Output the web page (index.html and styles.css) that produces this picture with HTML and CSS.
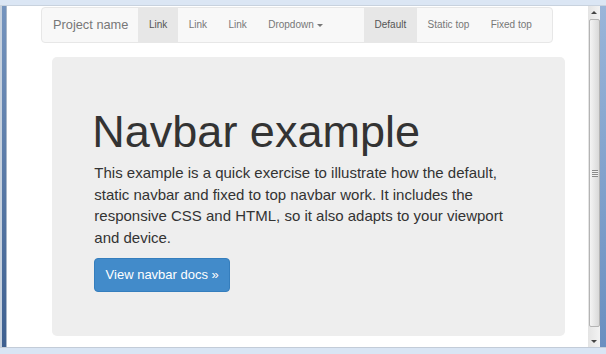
FILE: index.html
```html
<!DOCTYPE html>
<html lang="en">
<head>
    <meta charset="UTF-8">
    <title>Navbar Template</title>
    <link rel="stylesheet" href="styles.css">
</head>
<body>
    <div class="window">
        <div class="frame-top"></div>
        <div class="frame-mid">
            <div class="frame-left"></div>
            <div class="viewport">
                <nav class="navbar">
                    <a class="brand" href="#">Project name</a>
                    <ul class="nav">
                        <li class="active"><a href="#">Link</a></li>
                        <li><a href="#">Link</a></li>
                        <li><a href="#">Link</a></li>
                        <li><a href="#">Dropdown <b class="caret"></b></a></li>
                    </ul>
                    <ul class="nav nav-right">
                        <li class="active"><a href="#">Default</a></li>
                        <li><a href="#">Static top</a></li>
                        <li><a href="#">Fixed top</a></li>
                    </ul>
                </nav> <!-- navbar end -->

                <div class="jumbotron">
                    <h1>Navbar example</h1>
                    <p>This example is a quick exercise to illustrate how the default, static navbar and fixed to top navbar work. It includes the responsive CSS and HTML, so it also adapts to your viewport and device.</p>
                    <div class="actions">
                        <a class="btn-docs" href="#">View navbar docs &raquo;</a>
                    </div>
                </div> <!-- jumbotron end -->
            </div>
            <div class="scrollbar">
                <div class="sb-arrow up"></div>
                <div class="sb-thumb"><span class="grip"></span></div>
                <div class="sb-arrow down"></div>
            </div>
            <div class="frame-right"></div>
        </div>
        <div class="frame-bottom"></div>
    </div>
</body>
</html>
```

FILE: styles.css
```css
body {
    margin: 0;
    font-family: "Liberation Sans", Arial, sans-serif;
    color: #333;
}

/* browser window frame */
div.window {
    width: 606px;
    height: 354px;
    display: flex;
    flex-direction: column;
    overflow: hidden;
}

div.frame-top {
    height: 5px;
    background-color: #dbe6f4;
    border-bottom: 1px solid #c8d2de;
}

div.frame-bottom {
    height: 6px;
    background-color: #d9e5f4;
    border-top: 1px solid #c3ccd8;
}

div.frame-mid {
    height: 341px;
    display: flex;
}

div.frame-left {
    width: 7px;
    background:
        linear-gradient(#7594be, #3e6090) 2px 0 / 4px 100% no-repeat,
        linear-gradient(to right, #c6d1de 0 2px, transparent 2px 6px, #a9b7c9 6px);
}

div.frame-right {
    width: 6px;
    background: linear-gradient(#9ab5d9, #6a8fc0);
}

div.viewport {
    width: 581px;
    background-color: white;
}

/* scrollbar */
div.scrollbar {
    width: 12px;
    display: flex;
    flex-direction: column;
    background: linear-gradient(to right, #e4e4e4, #f3f3f3);
}

div.scrollbar div.sb-arrow {
    height: 12px;
    display: flex;
    align-items: center;
    justify-content: center;
}

div.scrollbar div.sb-arrow::after {
    content: "";
    border-left: 3px solid transparent;
    border-right: 3px solid transparent;
}

div.scrollbar div.sb-arrow.up::after {
    border-bottom: 3px solid #444;
}

div.scrollbar div.sb-arrow.down {
    margin-top: auto;
}

div.scrollbar div.sb-arrow.down::after {
    border-top: 3px solid #444;
}

div.scrollbar div.sb-thumb {
    height: 306px;
    margin: 1px 0 0 1px;
    border: 1px solid #b4b4b4;
    border-radius: 2px;
    background: linear-gradient(to right, #f4f4f4, #d9d9d9);
    display: flex;
    align-items: center;
    justify-content: center;
}

div.scrollbar span.grip {
    width: 6px;
    height: 7px;
    background: repeating-linear-gradient(#8a8a8a 0 1px, #f0f0f0 1px 2px);
}

/* navbar */
nav.navbar {
    box-sizing: border-box;
    width: 512px;
    height: 36px;
    margin: 1px 0 14px 34px;
    display: flex;
    background-color: #f8f8f8;
    border: 1px solid #e7e7e7;
    border-radius: 4px;
}

nav.navbar a {
    text-decoration: none;
}

nav.navbar a.brand {
    padding: 0 9.9px 0 11px;
    font-size: 12.8px;
    line-height: 34px;
    color: #777;
}

nav.navbar ul.nav {
    display: flex;
    margin: 0;
    padding: 0;
    list-style: none;
}

nav.navbar ul.nav-right {
    margin-left: auto;
    margin-right: 9.5px;
}

nav.navbar ul.nav li a {
    display: block;
    padding: 0 10.7px;
    font-size: 10px;
    line-height: 34px;
    color: #777;
}

nav.navbar ul.nav li.active a {
    color: #555;
    background-color: #e7e7e7;
}

nav.navbar b.caret {
    display: inline-block;
    width: 0;
    height: 0;
    vertical-align: middle;
    border-top: 3px solid #777;
    border-left: 3px solid transparent;
    border-right: 3px solid transparent;
}

/* jumbotron */
div.jumbotron {
    box-sizing: border-box;
    width: 513px;
    margin-left: 45px;
    padding: 35px 44px 35px 42.3px;
    background-color: #eee;
    border-radius: 5px;
}

div.jumbotron h1 {
    margin: 15px 0 5.5px -2px;
    font-size: 45px;
    font-weight: normal;
    line-height: 49.5px;
}

div.jumbotron p {
    margin: 0 0 9.5px;
    font-size: 15px;
    line-height: 21.7px;
}

div.jumbotron div.actions {
    margin-bottom: 9.5px;
}

a.btn-docs {
    display: inline-block;
    padding: 6px 10.3px;
    font-size: 13px;
    line-height: 19.4px;
    color: white;
    text-decoration: none;
    background-color: #428bca;
    border: 1px solid #357ebd;
    border-radius: 4px;
}
```
